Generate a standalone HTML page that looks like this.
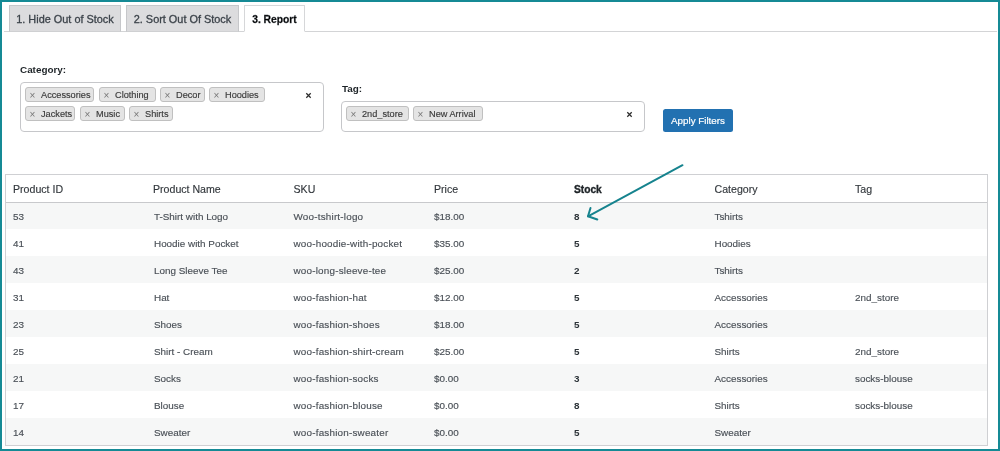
<!DOCTYPE html>
<html><head><meta charset="utf-8">
<style>
*{box-sizing:border-box;margin:0;padding:0}
html,body{width:1000px;height:451px;overflow:hidden;background:#fff}
.wrap{position:absolute;left:0;top:0;width:1000px;height:451px;will-change:transform}
body{font-family:"Liberation Sans",sans-serif;position:relative;color:#50575e}
.frame{position:absolute;left:0;top:0;width:1000px;height:451px;border:2px solid #158a95}
.abs{position:absolute;white-space:nowrap}
.tabline{position:absolute;left:4px;top:31px;width:993px;height:1px;background:#d3d4d6}
.tab{position:absolute;top:5px;height:27px;background:#dcdcde;border:1px solid #c6c7ca;border-bottom:1px solid #cfd0d2;font-size:10.9px;line-height:26px;color:#3c434a;text-align:center;-webkit-text-stroke:0.3px #3c434a}
.tab.active{background:#fff;border-color:#d6d7d9;border-bottom-color:#fff;color:#000;font-weight:bold;height:27px;font-size:10.3px;line-height:28px}
.lbl{position:absolute;font-size:9.9px;font-weight:bold;color:#1d2327;line-height:12px}
.box{position:absolute;border:1px solid #c6c7ca;border-radius:4px;background:#fff}
.chip{position:absolute;height:15px;background:#e4e4e4;border:1px solid #c0c0c0;border-radius:3px;font-size:9.2px;line-height:13px;color:#3a3a3a;white-space:nowrap;-webkit-text-stroke:0.15px #3a3a3a}
.chip i{font-style:normal;color:#777;-webkit-text-stroke:0;font-size:10px;position:absolute;left:3.5px;top:1px}
.chip span{position:absolute;left:15px;top:1px}
.clr{position:absolute;font-size:10px;font-weight:bold;color:#2c2c2c;line-height:12px}
.btn{position:absolute;left:663px;top:109px;width:70px;height:23px;background:#2271b1;border-radius:2.5px;color:#fff;-webkit-text-stroke:0.2px #fff;font-size:9.8px;line-height:23.6px;text-align:center}
.tbl{position:absolute;left:5px;top:174px;width:983px;height:272px;border:1px solid #cfd0d3}
.hdr{position:absolute;left:0;top:0;width:981px;height:28px;border-bottom:1px solid #c8c9cc}
.row{position:absolute;left:0;width:981px;height:27px}
.row.odd{background:#f6f7f7}
.c{position:absolute;white-space:nowrap;font-size:9.9px;line-height:27px;color:#4a5057;-webkit-text-stroke:0.15px #4a5057}
.h{position:absolute;white-space:nowrap;font-size:10.6px;line-height:29px;color:#32373c;-webkit-text-stroke:0.15px #32373c}
.h.b{color:#1d2327;-webkit-text-stroke:0.35px #1d2327;font-size:10.2px}
.b{font-weight:bold;color:#2c3338;-webkit-text-stroke:0px}
.sku{letter-spacing:0.2px}
</style></head><body><div class="wrap">
<div class="tabline"></div>
<div class="tab" style="left:9px;width:112px">1. Hide Out of Stock</div>
<div class="tab" style="left:126px;width:113px">2. Sort Out Of Stock</div>
<div class="tab active" style="left:244px;width:61px">3. Report</div>

<div class="lbl" style="left:20px;top:64px">Category:</div>
<div class="box" style="left:20px;top:82px;width:304px;height:50px">
</div>
<div class="chip" style="left:25px;top:87px;width:69px"><i>×</i><span>Accessories</span></div>
<div class="chip" style="left:99px;top:87px;width:57px"><i>×</i><span>Clothing</span></div>
<div class="chip" style="left:160px;top:87px;width:45px"><i>×</i><span>Decor</span></div>
<div class="chip" style="left:209px;top:87px;width:56px"><i>×</i><span>Hoodies</span></div>
<div class="chip" style="left:25px;top:106px;width:50px"><i>×</i><span>Jackets</span></div>
<div class="chip" style="left:80px;top:106px;width:45px"><i>×</i><span>Music</span></div>
<div class="chip" style="left:129px;top:106px;width:44px"><i>×</i><span>Shirts</span></div>
<svg class="abs" style="left:305px;top:91.5px" width="7" height="7"><path d="M1.3 1.3L5.7 5.7M5.7 1.3L1.3 5.7" stroke="#2c2c2c" stroke-width="1.25"/></svg>

<div class="lbl" style="left:342px;top:83.3px">Tag:</div>
<div class="box" style="left:341px;top:101px;width:304px;height:31px"></div>
<div class="chip" style="left:346px;top:106px;width:63px"><i>×</i><span>2nd_store</span></div>
<div class="chip" style="left:413px;top:106px;width:70px"><i>×</i><span>New Arrival</span></div>
<svg class="abs" style="left:626px;top:110.5px" width="7" height="7"><path d="M1.3 1.3L5.7 5.7M5.7 1.3L1.3 5.7" stroke="#2c2c2c" stroke-width="1.25"/></svg>

<div class="btn">Apply Filters</div>

<div class="tbl">
 <div class="row odd" style="top:28px;height:26px"></div>
 <div class="row odd" style="top:81px;height:27px"></div>
 <div class="row odd" style="top:135px;height:27px"></div>
 <div class="row odd" style="top:189px;height:27px"></div>
 <div class="row odd" style="top:243px;height:27px"></div>
 <div class="hdr">
  <div class="h" style="left:7px">Product ID</div>
  <div class="h" style="left:147px">Product Name</div>
  <div class="h" style="left:287.5px">SKU</div>
  <div class="h" style="left:428px">Price</div>
  <div class="h b" style="left:568px">Stock</div>
  <div class="h" style="left:708.5px">Category</div>
  <div class="h" style="left:849px">Tag</div>
 </div>
 <div class="c" style="left:7px;top:28px">53</div><div class="c" style="left:148px;top:28px">T-Shirt with Logo</div><div class="c sku" style="left:287.5px;top:28px">Woo-tshirt-logo</div><div class="c" style="left:428px;top:28px">$18.00</div><div class="c b" style="left:568px;top:28px">8</div><div class="c" style="left:708.5px;top:28px">Tshirts</div>
 <div class="c" style="left:7px;top:55px">41</div><div class="c" style="left:148px;top:55px">Hoodie with Pocket</div><div class="c sku" style="left:287.5px;top:55px">woo-hoodie-with-pocket</div><div class="c" style="left:428px;top:55px">$35.00</div><div class="c b" style="left:568px;top:55px">5</div><div class="c" style="left:708.5px;top:55px">Hoodies</div>
 <div class="c" style="left:7px;top:82px">43</div><div class="c" style="left:148px;top:82px">Long Sleeve Tee</div><div class="c sku" style="left:287.5px;top:82px">woo-long-sleeve-tee</div><div class="c" style="left:428px;top:82px">$25.00</div><div class="c b" style="left:568px;top:82px">2</div><div class="c" style="left:708.5px;top:82px">Tshirts</div>
 <div class="c" style="left:7px;top:109px">31</div><div class="c" style="left:148px;top:109px">Hat</div><div class="c sku" style="left:287.5px;top:109px">woo-fashion-hat</div><div class="c" style="left:428px;top:109px">$12.00</div><div class="c b" style="left:568px;top:109px">5</div><div class="c" style="left:708.5px;top:109px">Accessories</div><div class="c" style="left:849px;top:109px">2nd_store</div>
 <div class="c" style="left:7px;top:136px">23</div><div class="c" style="left:148px;top:136px">Shoes</div><div class="c sku" style="left:287.5px;top:136px">woo-fashion-shoes</div><div class="c" style="left:428px;top:136px">$18.00</div><div class="c b" style="left:568px;top:136px">5</div><div class="c" style="left:708.5px;top:136px">Accessories</div>
 <div class="c" style="left:7px;top:163px">25</div><div class="c" style="left:148px;top:163px">Shirt - Cream</div><div class="c sku" style="left:287.5px;top:163px">woo-fashion-shirt-cream</div><div class="c" style="left:428px;top:163px">$25.00</div><div class="c b" style="left:568px;top:163px">5</div><div class="c" style="left:708.5px;top:163px">Shirts</div><div class="c" style="left:849px;top:163px">2nd_store</div>
 <div class="c" style="left:7px;top:190px">21</div><div class="c" style="left:148px;top:190px">Socks</div><div class="c sku" style="left:287.5px;top:190px">woo-fashion-socks</div><div class="c" style="left:428px;top:190px">$0.00</div><div class="c b" style="left:568px;top:190px">3</div><div class="c" style="left:708.5px;top:190px">Accessories</div><div class="c" style="left:849px;top:190px">socks-blouse</div>
 <div class="c" style="left:7px;top:217px">17</div><div class="c" style="left:148px;top:217px">Blouse</div><div class="c sku" style="left:287.5px;top:217px">woo-fashion-blouse</div><div class="c" style="left:428px;top:217px">$0.00</div><div class="c b" style="left:568px;top:217px">8</div><div class="c" style="left:708.5px;top:217px">Shirts</div><div class="c" style="left:849px;top:217px">socks-blouse</div>
 <div class="c" style="left:7px;top:244px">14</div><div class="c" style="left:148px;top:244px">Sweater</div><div class="c sku" style="left:287.5px;top:244px">woo-fashion-sweater</div><div class="c" style="left:428px;top:244px">$0.00</div><div class="c b" style="left:568px;top:244px">5</div><div class="c" style="left:708.5px;top:244px">Sweater</div>
</div>

<svg class="abs" style="left:0;top:0" width="1000" height="451">
 <g stroke="#16838e" stroke-width="2" fill="none" stroke-linecap="round" stroke-linejoin="round">
  <line x1="682.5" y1="165.2" x2="588" y2="216.3"/>
  <polyline points="590.5,208 588,216.3 597.3,219.5"/>
 </g>
</svg>
<div class="frame"></div>
</div></body></html>
